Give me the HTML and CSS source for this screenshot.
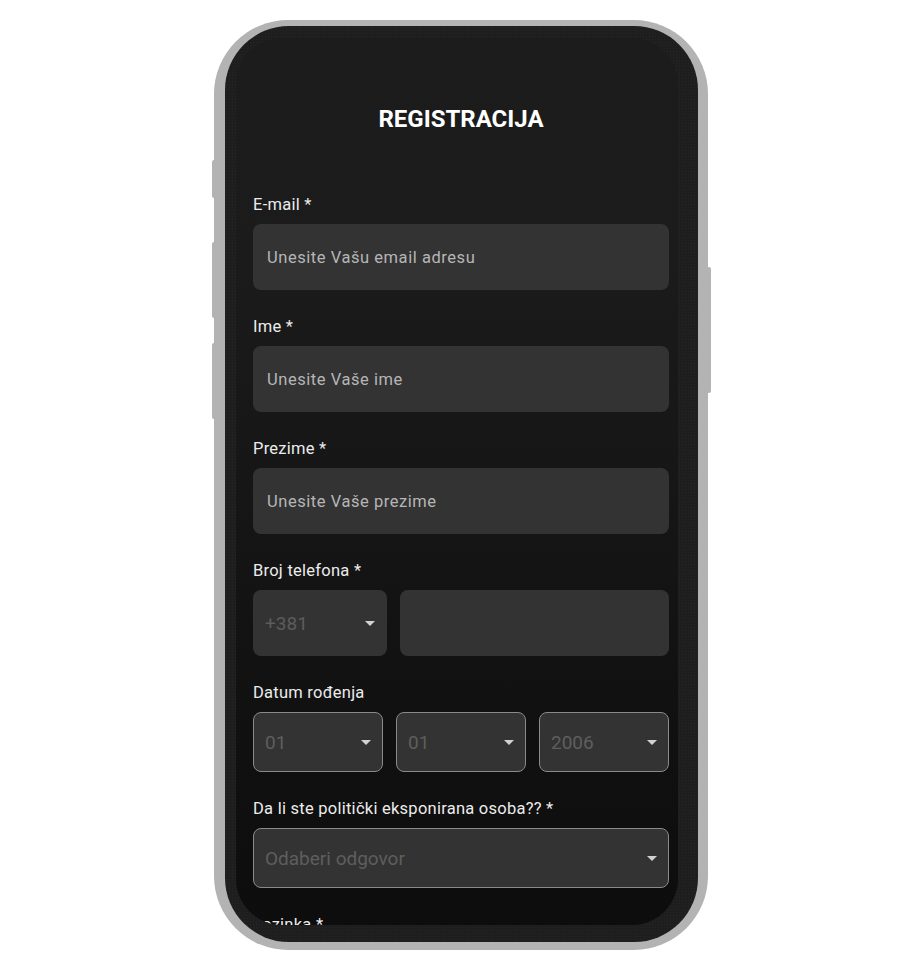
FILE: index.html
```html
<!DOCTYPE html>
<html lang="sr">
<head>
<meta charset="utf-8">
<title>Registracija</title>
<link rel="stylesheet" href="styles.css">
</head>
<body>
<div class="phone">
  <span class="btn btn-l1"></span>
  <span class="btn btn-l2"></span>
  <span class="btn btn-l3"></span>
  <span class="btn btn-r1"></span>
  <div class="bezel">
    <div class="screen">
      <h1 class="title">REGISTRACIJA</h1>

      <div class="field">
        <div class="label">E-mail *</div>
        <div class="input">Unesite Vašu email adresu</div>
      </div>

      <div class="field">
        <div class="label">Ime *</div>
        <div class="input">Unesite Vaše ime</div>
      </div>

      <div class="field">
        <div class="label">Prezime *</div>
        <div class="input">Unesite Vaše prezime</div>
      </div>

      <div class="field">
        <div class="label">Broj telefona *</div>
        <div class="phone-row">
          <div class="input prefix"><span class="muted">+381</span><span class="caret"></span></div>
          <div class="input"></div>
        </div>
      </div>

      <div class="field">
        <div class="label">Datum rođenja</div>
        <div class="date-row">
          <div class="select"><span>01</span><span class="caret"></span></div>
          <div class="select"><span>01</span><span class="caret"></span></div>
          <div class="select"><span>2006</span><span class="caret"></span></div>
        </div>
      </div>

      <div class="field">
        <div class="label">Da li ste politički eksponirana osoba?? *</div>
        <div class="select"><span>Odaberi odgovor</span><span class="caret"></span></div>
      </div>

      <div class="field">
        <div class="label">Lozinka *</div>
        <div class="input">Unesite lozinku</div>
      </div>
    </div>
  </div>
</div>
</body>
</html>
```
FILE: styles.css
```css
* { box-sizing: border-box; }

html, body {
  margin: 0;
  padding: 0;
  background: #ffffff;
  font-family: Roboto, "Noto Sans", "Liberation Sans", sans-serif;
}

.phone {
  position: relative;
  width: 494px;
  height: 930px;
  margin: 20px 0 0 214px;
  padding: 6px 10px 8px 11px;
  background: #b3b3b3;
  border-radius: 74px;
}

.btn {
  position: absolute;
  background: #b3b3b3;
  width: 4px;
  border-radius: 2px;
}
.btn-l1 { left: -2px; top: 140px; height: 38px; }
.btn-l2 { left: -2px; top: 222px; height: 76px; }
.btn-l3 { left: -2px; top: 323px; height: 76px; }
.btn-r1 { right: -3px; top: 247px; height: 126px; }

.bezel {
  height: 100%;
  padding: 12px 20px 17px 11px;
  background-color: #1e1e1e;
  background-image: radial-gradient(circle, #262626 0.6px, transparent 0.8px);
  background-size: 3px 3px;
  border-radius: 64px;
}

.screen {
  height: 100%;
  overflow: hidden;
  padding: 67px 9px 0 17px;
  border-radius: 46px;
  background: linear-gradient(180deg, #1c1c1c 0%, #1b1b1b 25%, #161616 50%, #111111 75%, #0d0d0d 100%);
}

.title {
  margin: 0 0 61px;
  text-align: center;
  font-size: 24px;
  line-height: 28px;
  font-weight: 700;
  color: #ffffff;
}

.field { margin-bottom: 26px; }

.label {
  font-size: 16.5px;
  line-height: 20px;
  padding-top: 1px;
  color: #ececec;
  margin-bottom: 9px;
  letter-spacing: 0.25px;
}

.input {
  height: 66px;
  display: flex;
  align-items: center;
  justify-content: space-between;
  padding: 0 14px;
  background: #333333;
  border-radius: 8px;
  font-size: 16.5px;
  color: #b6b6b6;
  letter-spacing: 0.55px;
}

.phone-row {
  display: flex;
  gap: 13px;
}
.phone-row .input { flex: 1; }
.phone-row .prefix {
  flex: 0 0 134px;
  padding: 0 12px;
}

.muted {
  font-size: 19px;
  color: #5c5c5c;
  letter-spacing: 0;
}

.date-row {
  display: grid;
  grid-template-columns: repeat(3, 1fr);
  gap: 13px;
}

.select {
  height: 60px;
  display: flex;
  align-items: center;
  justify-content: space-between;
  padding: 0 11px 0 11px;
  background: #333333;
  border: 1px solid #8a8a8a;
  border-radius: 8px;
  font-size: 19px;
  color: #5e5e5e;
}

.caret {
  width: 0;
  height: 0;
  border-left: 5px solid transparent;
  border-right: 5px solid transparent;
  border-top: 5px solid #d2d2d2;
}
```
